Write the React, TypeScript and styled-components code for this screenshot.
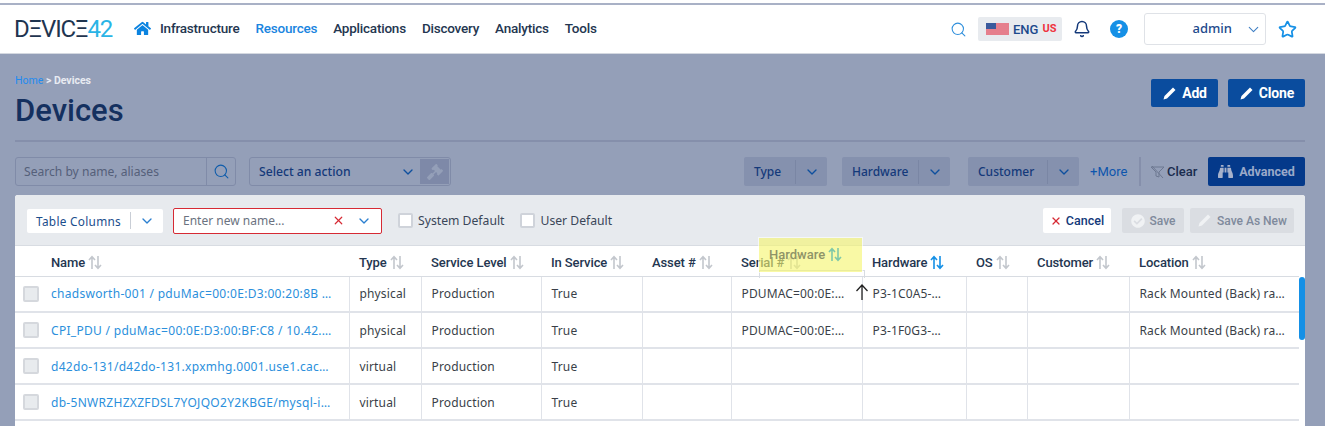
import * as React from "react";
import styled, { createGlobalStyle } from "styled-components";
import { Search, Bell, ChevronDown, Star, X } from "lucide-react";
import { FaHome, FaGavel, FaBinoculars, FaCheckCircle } from "react-icons/fa";

const Global = createGlobalStyle`
  html, body {
    margin: 0;
    height: 426px;
    overflow: hidden;
    background: #949fb8;
    font-family: "Noto Sans", sans-serif;
  }
  * { box-sizing: border-box; }
`;

const heading = `"Roboto", "Liberation Sans", sans-serif`;

const Page = styled.div`
  width: 1325px;
  height: 426px;
  position: relative;
  overflow: hidden;
`;

const TopStrip = styled.div`
  height: 5px;
  background: #fff;
  border-bottom: 2px solid #a9b1c6;
`;

const Header = styled.header`
  height: 49px;
  background: #fff;
  border-bottom: 1px solid #d4d8e0;
  display: flex;
  align-items: center;
  padding: 0 28px 0 15px;
`;

const Logo = styled.div`
  width: 98px;
  font-family: ${heading};
  font-size: 24px;
  font-weight: 400;
  letter-spacing: -1.2px;
  color: #1f3550;
  white-space: nowrap;
  margin: 0 21px 0 -1px;
  line-height: 1;
  span { color: #29b4e6; }
`;

const Nav = styled.nav`
  display: flex;
  align-items: center;
  gap: 16px;
  flex: 1;
  padding: 0 0 2px 1px;
  svg { color: #0b83e0; margin-right: -7px; }
`;

const NavItem = styled.a<{ $active?: boolean }>`
  font-family: ${heading};
  font-size: 13.5px;
  font-weight: 500;
  letter-spacing: -0.22px;
  color: ${(p) => (p.$active ? "#1a85e0" : "#243650")};
`;

const HeaderRight = styled.div`
  display: flex;
  align-items: center;
`;

const LangBox = styled.div`
  width: 84px;
  height: 24px;
  margin: 0 11px;
  background: #e8ebef;
  border-radius: 2px;
  display: flex;
  align-items: center;
  padding-left: 8px;
  gap: 4px;
  font-family: ${heading};
  font-size: 13px;
  font-weight: 500;
  color: #1d4a8c;
  sup {
    font-size: 11px;
    font-weight: 700;
    color: #ef3340;
    line-height: 1;
    margin: 0;
    position: relative;
    top: -1px;
  }
`;

const HelpBadge = styled.div`
  width: 18px;
  height: 18px;
  border-radius: 50%;
  background: #1590e6;
  color: #fff;
  font-family: ${heading};
  font-weight: 900;
  font-size: 12px;
  display: flex;
  align-items: center;
  justify-content: center;
  margin: 0 16px 0 19px;
`;

const UserBox = styled.div`
  width: 122px;
  height: 32px;
  border: 1px solid #dfe2e7;
  border-radius: 3px;
  display: flex;
  align-items: center;
  justify-content: flex-end;
  gap: 13px;
  padding-right: 3px;
  font-size: 13px;
  font-weight: 500;
  color: #1d4a8c;
  margin-right: 12px;
  span { margin-top: -2px; }
`;

const Main = styled.main`
  padding: 0 20px 0 15px;
`;

const TitleRow = styled.div`
  height: 88px;
  border-bottom: 2px solid #858fab;
  display: flex;
  justify-content: space-between;
  align-items: flex-start;
`;

const Crumbs = styled.div`
  padding-top: 21px;
  font-family: ${heading};
  font-size: 10.5px;
  font-weight: 700;
  line-height: 12px;
  color: #e8ebf2;
  a { color: #1f8bf0; font-weight: 400; }
`;

const Title = styled.h1`
  margin: 6px 0 0;
  font-family: ${heading};
  font-size: 31px;
  line-height: 36px;
  font-weight: 500;
  color: #14305f;
`;

const TitleActions = styled.div`
  display: flex;
  gap: 10px;
  padding-top: 25px;
`;

const PrimaryButton = styled.button`
  height: 28px;
  padding: 0 11px 0 11px;
  border: 0;
  border-radius: 2px;
  background: #0a4c9e;
  color: #fff;
  display: flex;
  align-items: center;
  gap: 5px;
  font-family: ${heading};
  font-size: 14px;
  font-weight: 700;
  letter-spacing: -0.2px;
`;

const FilterRow = styled.div`
  display: flex;
  align-items: stretch;
  height: 29px;
  margin-top: 15px;
`;

const SearchBox = styled.div`
  width: 221px;
  border: 1px solid #808ba8;
  border-radius: 3px;
  display: flex;
  align-items: center;
  font-size: 12.1px;
  color: #55607a;
  padding-left: 8px;
  span { flex: 1; }
  div {
    width: 29px;
    height: 100%;
    border-left: 1px solid #808ba8;
    display: flex;
    align-items: center;
    justify-content: center;
    color: #0e5cab;
  }
`;

const ActionBox = styled.div`
  width: 202px;
  margin-left: 13px;
  border: 1px solid #808ba8;
  border-radius: 3px;
  display: flex;
  align-items: center;
  padding: 1px 1px 1px 9px;
  font-size: 12.2px;
  font-weight: 500;
  color: #14397a;
  span { flex: 1; }
  svg { color: #0e4f9e; }
  div {
    width: 29px;
    height: 100%;
    margin-left: 4px;
    background: #7e89a8;
    display: flex;
    align-items: center;
    justify-content: center;
    svg { color: #949fb8; }
  }
`;

const FilterSpacer = styled.div`
  flex: 1;
`;

const FilterSelect = styled.div<{ $width: number; $gap: number }>`
  width: ${(p) => p.$width}px;
  margin-right: ${(p) => p.$gap}px;
  background: #8591ae;
  border-radius: 2px;
  display: flex;
  align-items: center;
  font-size: 12px;
  font-weight: 500;
  color: #14397a;
  span { flex: 1; padding-left: 10px; }
  div {
    width: 32px;
    height: 24px;
    border-left: 1px solid #7a86a4;
    display: flex;
    align-items: center;
    justify-content: center;
  }
`;

const MoreLink = styled.a`
  align-self: center;
  font-family: ${heading};
  font-size: 13px;
  font-weight: 400;
  color: #0d55ad;
  width: 49px;
  height: 18px;
  line-height: 18px;
`;

const VSep = styled.div`
  width: 2px;
  background: #858fab;
  margin-right: 9px;
`;

const ClearLink = styled.a`
  align-self: center;
  display: flex;
  align-items: center;
  gap: 2px;
  width: 58px;
  font-family: ${heading};
  font-size: 13px;
  font-weight: 500;
  color: #1a2c4e;
`;

const AdvancedButton = styled.button`
  width: 97px;
  border: 0;
  border-radius: 2px;
  background: #04398a;
  color: #9aa9c9;
  display: flex;
  align-items: center;
  justify-content: center;
  gap: 6px;
  font-family: ${heading};
  font-size: 12.5px;
  font-weight: 700;
  svg { color: #a7b2cb; }
`;

const Panel = styled.section`
  margin-top: 9px;
  background: #fff;
  border-radius: 3px 3px 0 0;
  height: 240px;
`;

const Toolbar = styled.div`
  height: 51px;
  background: #e7eaee;
  border-bottom: 1px solid #d8dce2;
  border-radius: 3px 3px 0 0;
  display: flex;
  align-items: center;
  padding: 1px 11px 0 12px;
`;

const ColumnsSelect = styled.div`
  width: 136px;
  height: 24px;
  background: #fff;
  border-radius: 2px;
  display: flex;
  align-items: center;
  padding-left: 9px;
  font-size: 11.8px;
  color: #1a4d8c;
  span { flex: 1; letter-spacing: 0.3px; }
  div {
    width: 33px;
    height: 17px;
    border-left: 1px solid #c9ced6;
    display: flex;
    align-items: center;
    justify-content: center;
  }
`;

const NameInput = styled.div`
  width: 209px;
  height: 26px;
  margin-left: 10px;
  background: #fff;
  border: 1px solid #d62a34;
  border-radius: 2px;
  display: flex;
  align-items: center;
  gap: 11px;
  padding: 0 9px;
  font-size: 12px;
  color: #6b7280;
  span { flex: 1; }
`;

const CheckLabel = styled.label`
  display: flex;
  align-items: center;
  gap: 5px;
  margin-left: 16px;
  font-size: 12.2px;
  color: #3a4658;
`;

const CheckBox = styled.i`
  display: block;
  width: 15px;
  height: 15px;
  background: #fff;
  border: 2px solid #cfd3da;
  border-radius: 2px;
`;

const ToolbarSpacer = styled.div`
  flex: 1;
`;

const CancelButton = styled.button`
  width: 68px;
  height: 25px;
  border: 0;
  border-radius: 2px;
  background: #fff;
  display: flex;
  align-items: center;
  justify-content: center;
  gap: 4px;
  font-family: ${heading};
  font-size: 12.5px;
  font-weight: 500;
  color: #14397a;
`;

const MutedButton = styled.button<{ $width: number }>`
  width: ${(p) => p.$width}px;
  height: 25px;
  margin-left: ${(p) => (p.$width > 80 ? 6 : 11)}px;
  border: 0;
  border-radius: 2px;
  background: #dadde2;
  display: flex;
  align-items: center;
  justify-content: center;
  gap: 5px;
  white-space: nowrap;
  font-family: ${heading};
  font-size: 12px;
  font-weight: 500;
  color: #7f8a9c;
  svg { color: #f0f2f4; flex: none; }
`;

const TableWrap = styled.div`
  position: relative;
`;

const Table = styled.table`
  width: 1284px;
  border-collapse: collapse;
  table-layout: fixed;
`;

const Th = styled.th`
  height: 30px;
  padding: 3px 0 0 10px;
  text-align: left;
  white-space: nowrap;
  font-family: ${heading};
  font-size: 13px;
  font-weight: 500;
  letter-spacing: -0.1px;
  color: #243650;
  border-bottom: 1px solid #d8dce2;
  &:first-child { padding-left: 36px; }
  svg { vertical-align: -3px; margin-left: 3px; }
`;

const Td = styled.td<{ $pad?: number }>`
  height: 36px;
  padding: 0 ${(p) => p.$pad ?? 12}px 0 10px;
  font-size: 12px;
  letter-spacing: 0.15px;
  color: #3a3f48;
  white-space: nowrap;
  overflow: hidden;
  text-overflow: ellipsis;
  border-bottom: 2px solid #e0e3e9;
  border-right: 1px solid #e0e3e9;
  &:last-child { border-right: 0; }
`;

const NameCell = styled.div`
  display: flex;
  align-items: center;
  gap: 12px;
  margin-left: -2px;
  padding-right: 3px;
  a {
    flex: 1;
    min-width: 0;
    overflow: hidden;
    text-overflow: ellipsis;
    letter-spacing: 0.3px;
    color: #2b8fdc;
  }
`;

const RowCheck = styled.i`
  display: block;
  flex: none;
  width: 16px;
  height: 16px;
  background: #e8ebee;
  border: 2px solid #d5d8dd;
  border-radius: 2px;
`;

const ScrollThumb = styled.div`
  position: absolute;
  top: 31px;
  right: 0;
  width: 6px;
  height: 63px;
  background: #1590e6;
  border-radius: 3px;
`;

const DragGhost = styled.div`
  position: absolute;
  left: 744px;
  top: -8px;
  width: 103px;
  height: 34px;
  background: rgba(246, 246, 110, 0.62);
  outline: 1px solid rgba(255, 255, 255, 0.6);
  padding: 0 0 2px 10px;
  display: flex;
  align-items: center;
  gap: 3px;
  font-family: ${heading};
  font-size: 13px;
  font-weight: 500;
  color: #8f9468;
`;

const GhostBox = styled.div`
  position: absolute;
  left: 744px;
  top: 24px;
  width: 106px;
  height: 8px;
  border: 1px solid #d8dce2;
  border-bottom: 0;
`;

const DropArrow = styled.svg`
  position: absolute;
  left: 840px;
  top: 38px;
`;

const SortIcon: React.FC<{ color?: string }> = ({ color = "#c3c7cd" }) => (
  <svg width="14" height="15" viewBox="0 0 14 15" fill="none" stroke={color} strokeWidth="1.6">
    <path d="M4 14V2M1 5l3-3.4L7 5" />
    <path d="M10 1v12M7 10l3 3.4 3-3.4" />
  </svg>
);

const Pencil: React.FC<{ color?: string }> = ({ color = "#fff" }) => (
  <svg width="15" height="15" viewBox="0 0 15 15">
    <path d="M1.5 13.5l1-3.5L11 1.5l2.5 2.5L5 12.5z" fill={color} />
  </svg>
);

const UsFlag = () => (
  <svg width="23" height="12" viewBox="0 0 23 12">
    <rect width="23" height="12" fill="#f3b6bd" />
    <path d="M0 1h23M0 3h23M0 5h23M0 7h23M0 9h23M0 11h23" stroke="#d8485c" strokeWidth="1" />
    <rect width="10" height="6" fill="#3a5a9c" />
  </svg>
);

const ClearFilter = () => (
  <svg width="15" height="14" viewBox="0 0 15 14" fill="none" stroke="#6d7891" strokeWidth="1">
    <path d="M1 2h13L9 7v5L6 11V7z" />
    <path d="M2 1l11 12" />
  </svg>
);

const columns = [
  { label: "Name", width: 334 },
  { label: "Type", width: 72 },
  { label: "Service Level", width: 120 },
  { label: "In Service", width: 101 },
  { label: "Asset #", width: 89 },
  { label: "Serial #", width: 131 },
  { label: "Hardware", width: 104, sorted: true },
  { label: "OS", width: 61 },
  { label: "Customer", width: 102 },
  { label: "Location", width: 170 },
];

const rows = [
  {
    name: "chadsworth-001 / pduMac=00:0E:D3:00:20:8B / 10.42.2.11",
    type: "physical",
    serial: "PDUMAC=00:0E:D3:00:20:8B",
    hardware: "P3-1C0A5-2000",
    location: "Rack Mounted (Back) rack 12",
  },
  {
    name: "CPI_PDU / pduMac=00:0E:D3:00:BF:C8 / 10.42.2.12",
    type: "physical",
    serial: "PDUMAC=00:0E:D3:00:BF:C8",
    hardware: "P3-1F0G3-2000",
    location: "Rack Mounted (Back) rack 14",
  },
  {
    name: "d42do-131/d42do-131.xpxmhg.0001.use1.cache.amazonaws.com",
    type: "virtual",
    serial: "",
    hardware: "",
    location: "",
  },
  {
    name: "db-5NWRZHZXZFDSL7YOJQO2Y2KBGE/mysql-instance-01",
    type: "virtual",
    serial: "",
    hardware: "",
    location: "",
  },
];

export default function App() {
  return (
    <Page>
      <Global />
      <TopStrip />
      <Header>
        <Logo>
          DΞVICΞ<span>42</span>
        </Logo>
        <Nav>
          <FaHome size={17} />
          <NavItem>Infrastructure</NavItem>
          <NavItem $active>Resources</NavItem>
          <NavItem>Applications</NavItem>
          <NavItem>Discovery</NavItem>
          <NavItem>Analytics</NavItem>
          <NavItem>Tools</NavItem>
        </Nav>
        <HeaderRight>
          <Search size={17} color="#2f8fdc" strokeWidth={1.5} />
          <LangBox>
            <UsFlag />
            ENG<sup>US</sup>
          </LangBox>
          <Bell size={18} color="#14397a" strokeWidth={2} />
          <HelpBadge>?</HelpBadge>
          <UserBox>
            <span>admin</span>
            <ChevronDown size={17} color="#3f7fc4" strokeWidth={1.5} />
          </UserBox>
          <Star size={19} color="#1590e6" strokeWidth={2.2} />
        </HeaderRight>
      </Header>
      <Main>
        <TitleRow>
          <div>
            <Crumbs>
              <a>Home</a> &gt; Devices
            </Crumbs>
            <Title>Devices</Title>
          </div>
          <TitleActions>
            <PrimaryButton>
              <Pencil />
              Add
            </PrimaryButton>
            <PrimaryButton>
              <Pencil />
              Clone
            </PrimaryButton>
          </TitleActions>
        </TitleRow>
        <FilterRow>
          <SearchBox>
            <span>Search by name, aliases</span>
            <div>
              <Search size={17} strokeWidth={1.5} />
            </div>
          </SearchBox>
          <ActionBox>
            <span>Select an action</span>
            <ChevronDown size={16} />
            <div>
              <FaGavel size={16} />
            </div>
          </ActionBox>
          <FilterSpacer />
          <FilterSelect $width={83} $gap={15}>
            <span>Type</span>
            <div>
              <ChevronDown size={16} color="#0e4f9e" />
            </div>
          </FilterSelect>
          <FilterSelect $width={108} $gap={18}>
            <span>Hardware</span>
            <div>
              <ChevronDown size={16} color="#0e4f9e" />
            </div>
          </FilterSelect>
          <FilterSelect $width={111} $gap={11}>
            <span>Customer</span>
            <div>
              <ChevronDown size={16} color="#0e4f9e" />
            </div>
          </FilterSelect>
          <MoreLink>+More</MoreLink>
          <VSep />
          <ClearLink>
            <ClearFilter />
            Clear
          </ClearLink>
          <AdvancedButton>
            <FaBinoculars size={15} />
            Advanced
          </AdvancedButton>
        </FilterRow>
        <Panel>
          <Toolbar>
            <ColumnsSelect>
              <span>Table Columns</span>
              <div>
                <ChevronDown size={16} color="#2b7fd0" />
              </div>
            </ColumnsSelect>
            <NameInput>
              <span>Enter new name...</span>
              <X size={13} color="#d62a34" strokeWidth={2.2} />
              <ChevronDown size={16} color="#2b7fd0" />
            </NameInput>
            <CheckLabel>
              <CheckBox />
              System Default
            </CheckLabel>
            <CheckLabel>
              <CheckBox />
              User Default
            </CheckLabel>
            <ToolbarSpacer />
            <CancelButton>
              <X size={12} color="#d62a34" strokeWidth={2.4} />
              Cancel
            </CancelButton>
            <MutedButton $width={62}>
              <FaCheckCircle size={14} />
              Save
            </MutedButton>
            <MutedButton $width={104}>
              <Pencil color="#f0f2f4" />
              Save As New
            </MutedButton>
          </Toolbar>
          <TableWrap>
            <Table>
              <colgroup>
                {columns.map((c) => (
                  <col key={c.label} width={c.width} />
                ))}
              </colgroup>
              <thead>
                <tr>
                  {columns.map((c) => (
                    <Th key={c.label}>
                      {c.label}
                      <SortIcon color={c.sorted ? "#1590e6" : undefined} />
                    </Th>
                  ))}
                </tr>
              </thead>
              <tbody>
                {rows.map((r) => (
                  <tr key={r.name}>
                    <Td>
                      <NameCell>
                        <RowCheck />
                        <a>{r.name}</a>
                      </NameCell>
                    </Td>
                    <Td $pad={4}>{r.type}</Td>
                    <Td>Production</Td>
                    <Td>True</Td>
                    <Td />
                    <Td $pad={14}>{r.serial}</Td>
                    <Td $pad={18}>{r.hardware}</Td>
                    <Td />
                    <Td />
                    <Td>{r.location}</Td>
                  </tr>
                ))}
              </tbody>
            </Table>
            <ScrollThumb />
            <GhostBox />
            <DragGhost>
              Hardware
              <SortIcon color="#7fc8a8" />
            </DragGhost>
            <DropArrow width="14" height="16" viewBox="0 0 14 16" fill="none" strokeWidth="1.3">
              <path d="M7 16V1M1.5 7L7 1l5.5 6" stroke="#222" />
            </DropArrow>
          </TableWrap>
        </Panel>
      </Main>
    </Page>
  );
}
